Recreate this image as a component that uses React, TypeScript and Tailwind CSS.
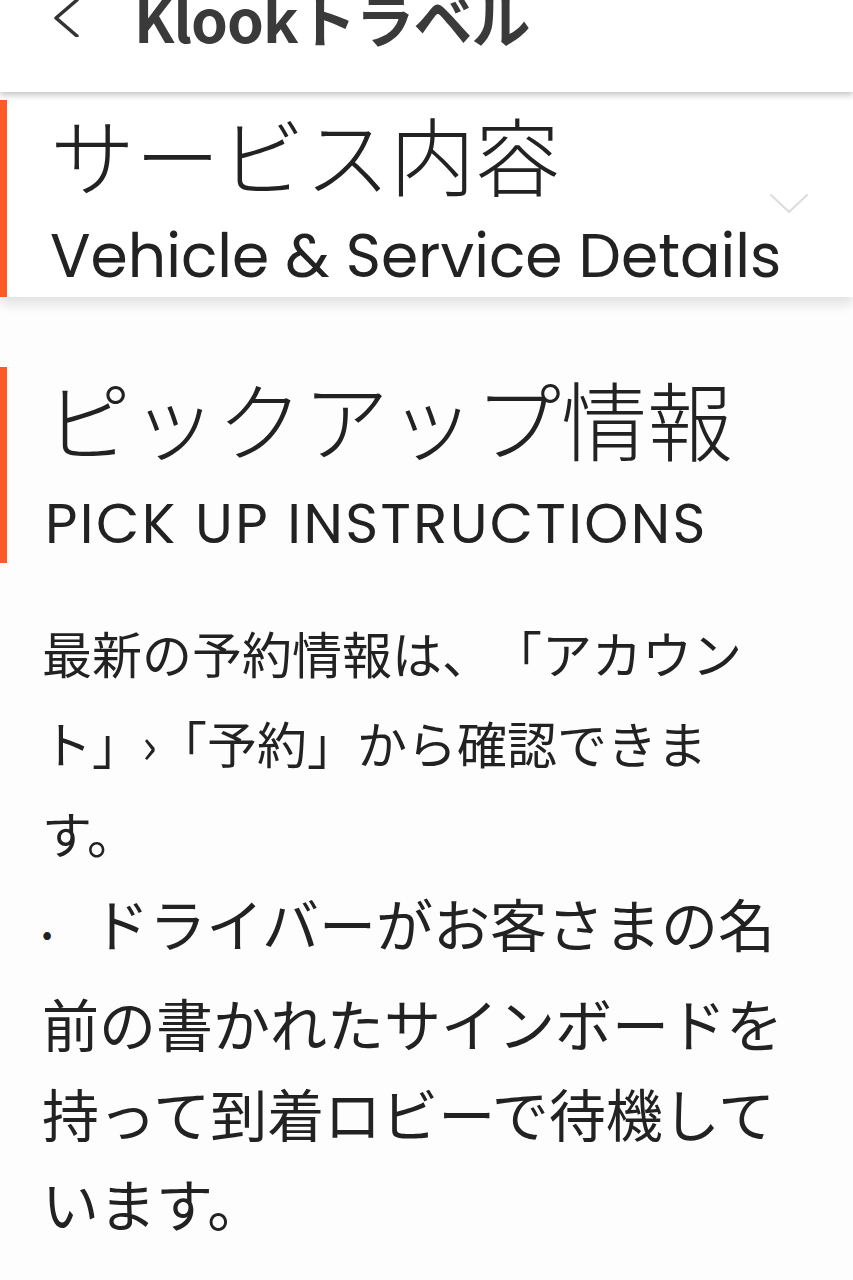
import React from 'react';

const jp = "font-['Noto_Sans_CJK_JP','Noto_Sans',sans-serif]";
const latin = "font-['Poppins','Lato','Noto_Sans_CJK_JP',sans-serif]";

const ChevronLeft: React.FC = () => (
  <svg width="32" height="40" viewBox="0 0 32 40" fill="none">
    <path d="M27 3 L6 21 L27 39" stroke="#333" strokeWidth="3.5" strokeLinecap="round" strokeLinejoin="round" />
  </svg>
);

const ChevronDown: React.FC = () => (
  <svg width="40" height="22" viewBox="0 0 40 22" fill="none">
    <path d="M2 2 L20 19 L38 2" stroke="#dcdcdc" strokeWidth="2" strokeLinecap="round" strokeLinejoin="round" />
  </svg>
);

const App: React.FC = () => {
  return (
    <div className={`min-h-[1280px] w-[853px] overflow-hidden bg-[#fdfdfd] text-[#222] ${jp}`}>
      {/* header */}
      <header className="relative z-20 h-[92px] bg-white shadow-[0_3px_6px_rgba(0,0,0,0.22)]">
        <div className="flex h-[46px] items-center gap-[52px] pl-[50px] -translate-y-[6px]">
          <ChevronLeft />
          <h1 className="text-[59px] font-bold leading-none tracking-[-1px] text-[#3a3a3a]">Klookトラベル</h1>
        </div>
      </header>

      {/* service card */}
      <section className="relative z-10 mt-[8px] flex h-[197px] bg-white shadow-[0_8px_10px_rgba(0,0,0,0.10)]">
        <div className="w-[7px] bg-[#fd5b26]" />
        <div className="pl-[43px] pt-[3px]">
          <h2 className="text-[85px] font-light leading-[100px] text-[#222]">サービス内容</h2>
          <p className={`mt-[20px] whitespace-nowrap text-[60px] leading-[66px] text-[#222] ${latin}`}>Vehicle &amp; Service Details</p>
        </div>
        <div className="absolute right-[44px] top-[93px]">
          <ChevronDown />
        </div>
      </section>

      {/* pick up */}
      <section className="mt-[70px] flex h-[196px]">
        <div className="w-[7px] bg-[#fd5b26]" />
        <div className="pl-[38px] pt-[1px]">
          <h2 className="text-[86px] font-light leading-[100px] text-[#222]">ピックアップ情報</h2>
          <p className={`mt-[26px] text-[56px] leading-[60px] tracking-[2.4px] text-[#222] ${latin}`}>PICK UP INSTRUCTIONS</p>
        </div>
      </section>

      <div className="mt-[44px] w-[800px] pl-[42px] leading-[90px] text-[#222] [text-spacing-trim:space-all]">
        <p className="w-[720px] text-[50px]">最新の予約情報は、「アカウント」›「予約」から確認できます。</p>
        <p className="text-[57px]">
          <span className="mr-[40px] inline-block align-middle text-[30px]">•</span>
          ドライバーがお客さまの名前の書かれたサインボードを持って到着ロビーで待機しています。
        </p>
      </div>
    </div>
  );
};

export default App;
